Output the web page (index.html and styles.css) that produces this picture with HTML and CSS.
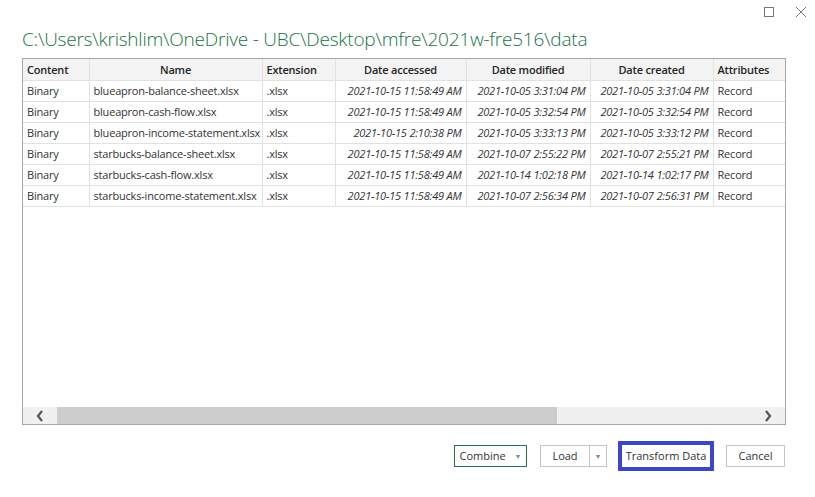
FILE: index.html
```html
<!DOCTYPE html>
<html>
<head>
<meta charset="utf-8">
<link rel="stylesheet" href="styles.css">
</head>
<body>
<div class="dialog">
  <div class="winbar">
    <span class="winbtn"><svg width="12" height="12" viewBox="0 0 12 12"><rect x="1.5" y="1.5" width="9" height="9" fill="none" stroke="#777" stroke-width="1"/></svg></span>
    <span class="winbtn"><svg width="12" height="12" viewBox="0 0 12 12"><path d="M1 1L11 11M11 1L1 11" stroke="#777" stroke-width="1"/></svg></span>
  </div>
  <h1 class="title">C:\Users\krishlim\OneDrive - UBC\Desktop\mfre\2021w-fre516\data</h1>
  <div class="grid">
    <div class="grid-body">
      <table class="tbl">
        <colgroup>
          <col class="c1"><col class="c2"><col class="c3"><col class="c4"><col class="c5"><col class="c6"><col class="c7">
        </colgroup>
        <thead>
          <tr><th class="left">Content</th><th>Name</th><th class="left">Extension</th><th>Date accessed</th><th>Date modified</th><th>Date created</th><th class="left">Attributes</th></tr>
        </thead>
        <tbody>
          <tr><td>Binary</td><td>blueapron-balance-sheet.xlsx</td><td>.xlsx</td><td class="dt">2021-10-15 11:58:49 AM</td><td class="dt">2021-10-05 3:31:04 PM</td><td class="dt">2021-10-05 3:31:04 PM</td><td>Record</td></tr>
          <tr><td>Binary</td><td>blueapron-cash-flow.xlsx</td><td>.xlsx</td><td class="dt">2021-10-15 11:58:49 AM</td><td class="dt">2021-10-05 3:32:54 PM</td><td class="dt">2021-10-05 3:32:54 PM</td><td>Record</td></tr>
          <tr><td>Binary</td><td>blueapron-income-statement.xlsx</td><td>.xlsx</td><td class="dt">2021-10-15 2:10:38 PM</td><td class="dt">2021-10-05 3:33:13 PM</td><td class="dt">2021-10-05 3:33:12 PM</td><td>Record</td></tr>
          <tr><td>Binary</td><td>starbucks-balance-sheet.xlsx</td><td>.xlsx</td><td class="dt">2021-10-15 11:58:49 AM</td><td class="dt">2021-10-07 2:55:22 PM</td><td class="dt">2021-10-07 2:55:21 PM</td><td>Record</td></tr>
          <tr><td>Binary</td><td>starbucks-cash-flow.xlsx</td><td>.xlsx</td><td class="dt">2021-10-15 11:58:49 AM</td><td class="dt">2021-10-14 1:02:18 PM</td><td class="dt">2021-10-14 1:02:17 PM</td><td>Record</td></tr>
          <tr><td>Binary</td><td>starbucks-income-statement.xlsx</td><td>.xlsx</td><td class="dt">2021-10-15 11:58:49 AM</td><td class="dt">2021-10-07 2:56:34 PM</td><td class="dt">2021-10-07 2:56:31 PM</td><td>Record</td></tr>
        </tbody>
      </table>
    </div>
    <div class="hscroll">
      <span class="arrow"><svg width="10" height="12" viewBox="0 0 10 12"><path d="M7 1L3 6L7 11" fill="none" stroke="#555" stroke-width="2.2"/></svg></span>
      <div class="track"><div class="thumb"></div></div>
      <span class="arrow"><svg width="10" height="12" viewBox="0 0 10 12"><path d="M3 1L7 6L3 11" fill="none" stroke="#555" stroke-width="2.2"/></svg></span>
    </div>
  </div>
  <div class="footer">
    <button class="btn combine">Combine <span class="caret">▼</span></button>
    <div class="split">
      <button class="btn load">Load</button><button class="btn drop"><span class="caret">▼</span></button>
    </div>
    <button class="btn transform">Transform Data</button>
    <button class="btn cancel">Cancel</button>
  </div>
</div>
</body>
</html>
```
FILE: styles.css
```css
* { box-sizing: border-box; }
html, body { margin: 0; padding: 0; background: #fff; }
body { font-family: "Open Sans", "Noto Sans", sans-serif; color: #333; }
.dialog { width: 815px; height: 497px; padding: 0 30px 0 22px; display: flex; flex-direction: column; }
.winbar { display: flex; justify-content: flex-end; gap: 20px; height: 25px; padding-top: 6px; margin-right: -22px; }
.winbtn { width: 12px; height: 12px; display: flex; }
.title { margin: 1px 0 0 0; font-weight: 300; font-size: 19px; color: #217346; height: 32px; line-height: 26px; letter-spacing: -0.22px; white-space: nowrap; }
.grid { width: 764px; height: 367px; border: 1px solid #a6a6a6; display: flex; flex-direction: column; }
.grid-body { flex: 1; overflow: hidden; }
.tbl { border-collapse: collapse; table-layout: fixed; width: 763px; font-size: 11px; letter-spacing: -0.2px; }
.c1 { width: 66px; } .c2 { width: 173px; } .c3 { width: 73px; } .c4 { width: 131px; } .c5 { width: 124px; } .c6 { width: 123px; } .c7 { width: 73px; }
.tbl th { background: #f3f3f3; font-weight: 600; color: #252525; height: 21px; padding: 0 4px; border-right: 1px solid #e1e1e1; border-bottom: 1px solid #e1e1e1; text-align: center; white-space: nowrap; }
.tbl th.left { text-align: left; }
.tbl td { height: 21px; padding: 0 4px; border-right: 1px solid #e1e1e1; border-bottom: 1px solid #e1e1e1; white-space: nowrap; color: #333; overflow: hidden; }
.tbl td.dt { font-style: italic; text-align: right; }
.tbl th:last-child, .tbl td:last-child { border-right: none; }
.hscroll { height: 17px; background: #f0f0f0; display: flex; align-items: center; }
.arrow { width: 34px; display: flex; justify-content: center; align-items: center; height: 17px; }
.track { flex: 1; height: 17px; }
.thumb { width: 500px; height: 17px; background: #cdcdcd; }
.footer { display: flex; align-items: center; justify-content: flex-end; height: 60px; padding-top: 1px; }
.btn { font-family: inherit; font-size: 11px; color: #333; background: #fff; border: 1px solid #c4c4c4; height: 22px; padding: 0; cursor: default; }
.caret { font-size: 7px; color: #888; margin-left: 6px; vertical-align: 1px; }
.combine { width: 73px; border-color: #217346; margin-right: 13px; }
.split { display: flex; margin-right: 11px; }
.load { width: 50px; }
.drop { width: 17px; border-left: none; }
.drop .caret { margin-left: 0; }
.transform { width: 96px; height: 30px; border: 4px solid #3d46c9; margin-right: 12px; }
.cancel { width: 59px; }
```
